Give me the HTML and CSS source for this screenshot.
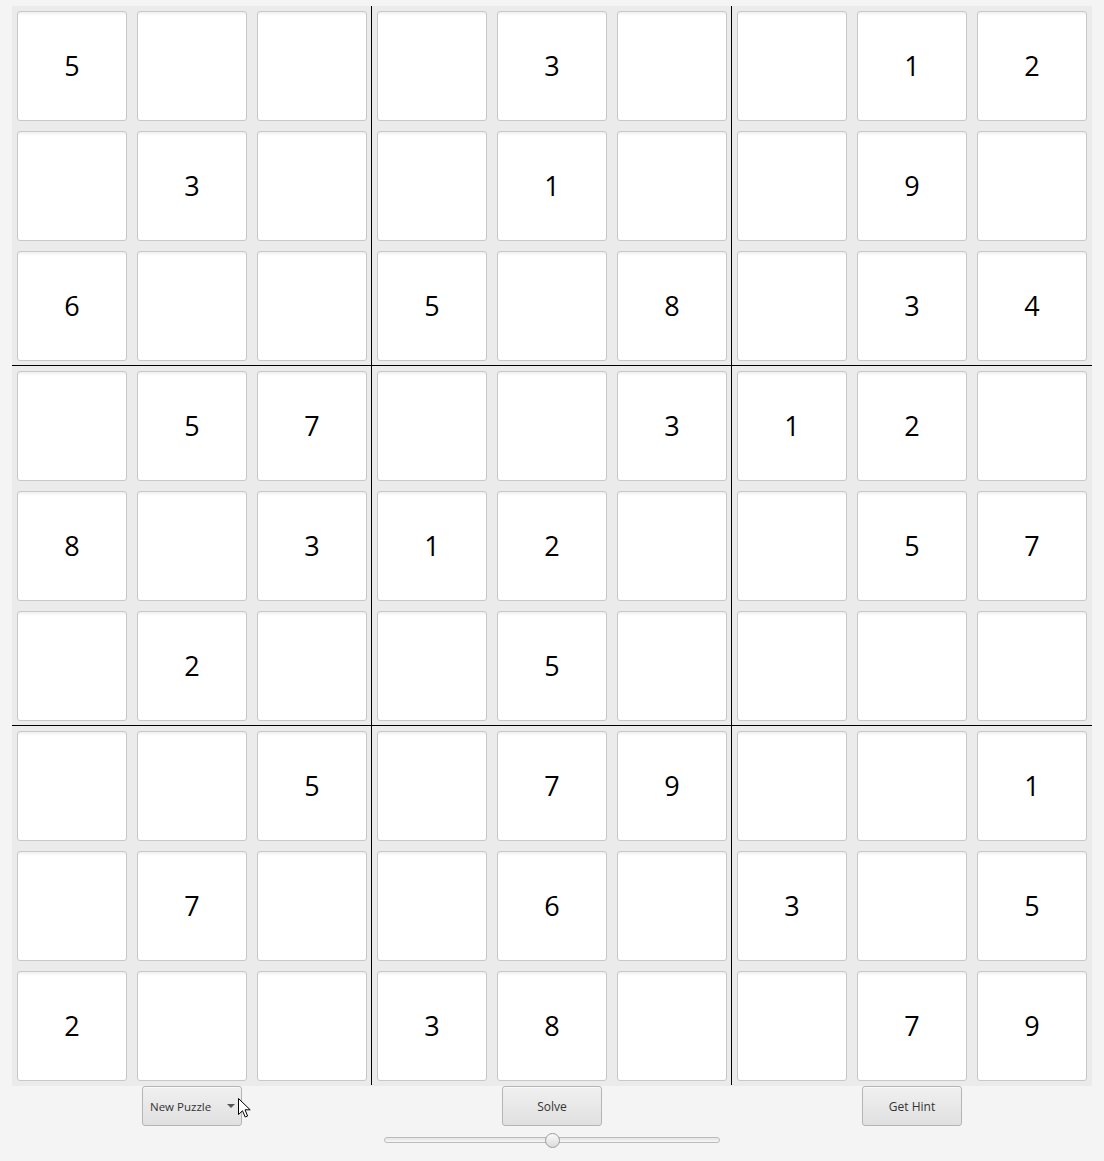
FILE: index.html
```html
<!DOCTYPE html>
<html>
<head>
<meta charset="utf-8">
<link rel="stylesheet" href="styles.css">
</head>
<body>
<div class="board">
  <div class="cell">5</div><div class="cell"></div><div class="cell"></div><div class="cell"></div><div class="cell">3</div><div class="cell"></div><div class="cell"></div><div class="cell">1</div><div class="cell">2</div>
  <div class="cell"></div><div class="cell">3</div><div class="cell"></div><div class="cell"></div><div class="cell">1</div><div class="cell"></div><div class="cell"></div><div class="cell">9</div><div class="cell"></div>
  <div class="cell">6</div><div class="cell"></div><div class="cell"></div><div class="cell">5</div><div class="cell"></div><div class="cell">8</div><div class="cell"></div><div class="cell">3</div><div class="cell">4</div>
  <div class="cell"></div><div class="cell">5</div><div class="cell">7</div><div class="cell"></div><div class="cell"></div><div class="cell">3</div><div class="cell">1</div><div class="cell">2</div><div class="cell"></div>
  <div class="cell">8</div><div class="cell"></div><div class="cell">3</div><div class="cell">1</div><div class="cell">2</div><div class="cell"></div><div class="cell"></div><div class="cell">5</div><div class="cell">7</div>
  <div class="cell"></div><div class="cell">2</div><div class="cell"></div><div class="cell"></div><div class="cell">5</div><div class="cell"></div><div class="cell"></div><div class="cell"></div><div class="cell"></div>
  <div class="cell"></div><div class="cell"></div><div class="cell">5</div><div class="cell"></div><div class="cell">7</div><div class="cell">9</div><div class="cell"></div><div class="cell"></div><div class="cell">1</div>
  <div class="cell"></div><div class="cell">7</div><div class="cell"></div><div class="cell"></div><div class="cell">6</div><div class="cell"></div><div class="cell">3</div><div class="cell"></div><div class="cell">5</div>
  <div class="cell">2</div><div class="cell"></div><div class="cell"></div><div class="cell">3</div><div class="cell">8</div><div class="cell"></div><div class="cell"></div><div class="cell">7</div><div class="cell">9</div>
  <div class="vline vline-1"></div>
  <div class="vline vline-2"></div>
  <div class="hline hline-1"></div>
  <div class="hline hline-2"></div>
</div>
<div class="controls">
  <div class="control-col">
    <div class="btn menu-btn">
      <span>New Puzzle</span>
      <span class="arrow"></span>
      <svg class="cursor" width="13" height="20" viewBox="0 0 13 20"><path d="M0.5 0.5 L0.5 16.5 L4.5 12.8 L7.2 19 L9.6 18 L7 11.8 L12.2 11.8 Z" fill="#fff" stroke="#000" stroke-width="1" stroke-linejoin="miter"/></svg>
    </div>
  </div>
  <div class="control-col">
    <div class="btn">Solve</div>
  </div>
  <div class="control-col">
    <div class="btn">Get Hint</div>
  </div>
</div>
<div class="slider-row">
  <div class="slider">
    <div class="track"></div>
    <div class="thumb"></div>
  </div>
</div>
</body>
</html>
```
FILE: styles.css
```css
html, body {
  margin: 0;
  padding: 0;
  background: #f4f4f4;
  font-family: "Open Sans", "Noto Sans", sans-serif;
}

.board {
  position: relative;
  margin: 6px 0 0 12px;
  width: 1080px;
  height: 1080px;
  background: #ebebeb;
  display: grid;
  grid-template-columns: repeat(9, 110px);
  grid-template-rows: repeat(9, 110px);
  gap: 10px;
  padding: 5px;
  box-sizing: border-box;
}

.cell {
  box-sizing: border-box;
  border: 1px solid #c8c8c8;
  border-radius: 3px;
  background: linear-gradient(to bottom, #efefef 0px, #ffffff 4px, #ffffff 100%);
  display: flex;
  align-items: center;
  justify-content: center;
  padding-bottom: 2px;
  font-size: 27px;
  color: #000;
  line-height: 1;
}

.vline {
  position: absolute;
  top: 0;
  width: 1px;
  height: 1079px;
  background: #000;
}
.vline-1 { left: 359px; }
.vline-2 { left: 719px; }

.hline {
  position: absolute;
  left: 0;
  height: 1px;
  width: 1080px;
  background: #000;
}
.hline-1 { top: 359px; }
.hline-2 { top: 719px; }

.controls {
  margin-left: 12px;
  width: 1080px;
  display: flex;
}

.control-col {
  width: 360px;
  display: flex;
  justify-content: center;
}

.btn {
  position: relative;
  box-sizing: border-box;
  width: 100px;
  height: 40px;
  border: 1px solid #b4b4b4;
  border-radius: 3px;
  background: linear-gradient(to bottom, #f0f0f0 0%, #e0e0e0 100%);
  box-shadow: inset 0 1px 0 #fafafa;
  display: flex;
  align-items: center;
  justify-content: center;
  font-size: 12px;
  color: #333;
}

.menu-btn {
  justify-content: flex-start;
  padding-left: 7px;
  font-size: 11.5px;
}

.arrow {
  position: absolute;
  left: 84px;
  top: 17px;
  width: 0;
  height: 0;
  border-left: 4px solid transparent;
  border-right: 4px solid transparent;
  border-top: 4px solid #555;
}

.cursor {
  position: absolute;
  left: 95px;
  top: 11px;
}

.slider-row {
  display: flex;
  justify-content: center;
  padding-top: 7px;
}

.slider {
  position: relative;
  width: 336px;
  height: 15px;
}

.track {
  position: absolute;
  left: 0;
  right: 0;
  top: 4px;
  height: 6px;
  box-sizing: border-box;
  border: 1px solid #bcbcbc;
  border-radius: 3px;
  background: linear-gradient(to bottom, #e4e4e4, #f6f6f6);
}

.thumb {
  position: absolute;
  left: 161px;
  top: 0;
  width: 15px;
  height: 15px;
  box-sizing: border-box;
  border: 1px solid #9c9c9c;
  border-radius: 50%;
  background: linear-gradient(to bottom, #fafafa, #dcdcdc);
}
```
